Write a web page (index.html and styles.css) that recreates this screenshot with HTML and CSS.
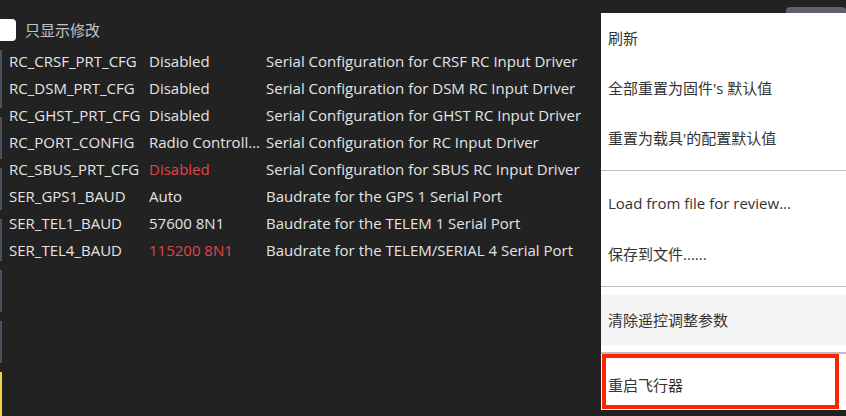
FILE: index.html
```html
<!DOCTYPE html>
<html lang="zh-CN">
<head>
<meta charset="utf-8">
<link rel="stylesheet" href="styles.css">
</head>
<body>
<div class="page">
  <div class="filter">
    <span class="checkbox"></span>
    <span class="filter-label">只显示修改</span>
  </div>
  <div class="content">
    <div class="strip">
      <i class="seg s1"></i><i class="seg"></i><i class="seg"></i><i class="seg"></i><i class="seg"></i><i class="seg"></i><i class="seg active"></i>
    </div>
    <div class="table">
      <div class="row"><span class="c-name">RC_CRSF_PRT_CFG</span><span class="c-value">Disabled</span><span class="c-desc">Serial Configuration for CRSF RC Input Driver</span></div>
      <div class="row"><span class="c-name">RC_DSM_PRT_CFG</span><span class="c-value">Disabled</span><span class="c-desc">Serial Configuration for DSM RC Input Driver</span></div>
      <div class="row"><span class="c-name">RC_GHST_PRT_CFG</span><span class="c-value">Disabled</span><span class="c-desc">Serial Configuration for GHST RC Input Driver</span></div>
      <div class="row"><span class="c-name">RC_PORT_CONFIG</span><span class="c-value">Radio Controller</span><span class="c-desc">Serial Configuration for RC Input Driver</span></div>
      <div class="row"><span class="c-name">RC_SBUS_PRT_CFG</span><span class="c-value changed">Disabled</span><span class="c-desc">Serial Configuration for SBUS RC Input Driver</span></div>
      <div class="row"><span class="c-name">SER_GPS1_BAUD</span><span class="c-value">Auto</span><span class="c-desc">Baudrate for the GPS 1 Serial Port</span></div>
      <div class="row"><span class="c-name">SER_TEL1_BAUD</span><span class="c-value">57600 8N1</span><span class="c-desc">Baudrate for the TELEM 1 Serial Port</span></div>
      <div class="row"><span class="c-name">SER_TEL4_BAUD</span><span class="c-value changed">115200 8N1</span><span class="c-desc">Baudrate for the TELEM/SERIAL 4 Serial Port</span></div>
    </div>
  </div>
  <div class="tools-btn"></div>
  <div class="menu">
    <div class="item">刷新</div>
    <div class="item">全部重置为固件's 默认值</div>
    <div class="item">重置为载具'的配置默认值</div>
    <div class="sep"></div>
    <div class="item">Load from file for review...</div>
    <div class="item">保存到文件......</div>
    <div class="sep"></div>
    <div class="item hover">清除遥控调整参数</div>
    <div class="sep thick"></div>
    <div class="item marked">重启飞行器</div>
  </div>
</div>
</body>
</html>
```
FILE: styles.css
```css
html, body {
  margin: 0;
  padding: 0;
  background: #222222;
  overflow: hidden;
}
body {
  width: 846px;
  height: 416px;
  font-family: "Open Sans", "Noto Sans CJK SC", sans-serif;
  font-size: 15px;
}
.page {
  position: relative;
  width: 846px;
  height: 416px;
  overflow: hidden;
}
.filter {
  display: flex;
  align-items: center;
  gap: 9px;
  padding-top: 19px;
  height: 22px;
}
.checkbox {
  width: 16px;
  height: 22px;
  background: #ffffff;
  border-radius: 0 4px 4px 0;
}
.filter-label {
  color: #c4c4c4;
  font-size: 15px;
  line-height: 22px;
}
.content {
  display: flex;
  align-items: flex-start;
  margin-top: 7px;
}
.strip {
  width: 2px;
  display: flex;
  flex-direction: column;
  gap: 9px;
  padding-top: 2px;
}
.seg {
  display: block;
  width: 2px;
  height: 42px;
  background: #4f4f62;
}
.seg.s1 { height: 58px; }
.seg.active { height: 44px; background: #f2d54a; }
.table {
  padding-left: 7px;
  display: flex;
  flex-direction: column;
}
.row {
  display: grid;
  grid-template-columns: 140px 117px auto;
  height: 26.9px;
  align-items: center;
  color: #e4e4e4;
  white-space: nowrap;
}
.c-value {
  overflow: hidden;
  text-overflow: ellipsis;
  padding-right: 6px;
}
.c-value.changed { color: #e0454a; }
.tools-btn {
  position: absolute;
  left: 786px;
  top: 7px;
  width: 60px;
  height: 14px;
  background: #5f5f6e;
  border-radius: 4px 4px 0 0;
}
.menu {
  position: absolute;
  left: 601px;
  top: 13px;
  width: 245px;
  background: #ffffff;
  display: flex;
  flex-direction: column;
  color: #333333;
}
.item {
  height: 50px;
  box-sizing: border-box;
  padding-bottom: 2px;
  display: flex;
  align-items: center;
  padding-left: 7px;
  white-space: nowrap;
}
.item.hover { background: #f5f5f5; }
.sep {
  height: 1px;
  background: #bdbdbd;
  margin: 7px 0 8px;
}
.sep.thick {
  height: 2px;
  margin: 7px 0 6px;
}
.item.marked {
  position: relative;
}
.item.marked::after {
  content: "";
  position: absolute;
  left: 1px;
  top: -6px;
  width: 229px;
  height: 47px;
  border: 4px solid #ff2400;
}
```
